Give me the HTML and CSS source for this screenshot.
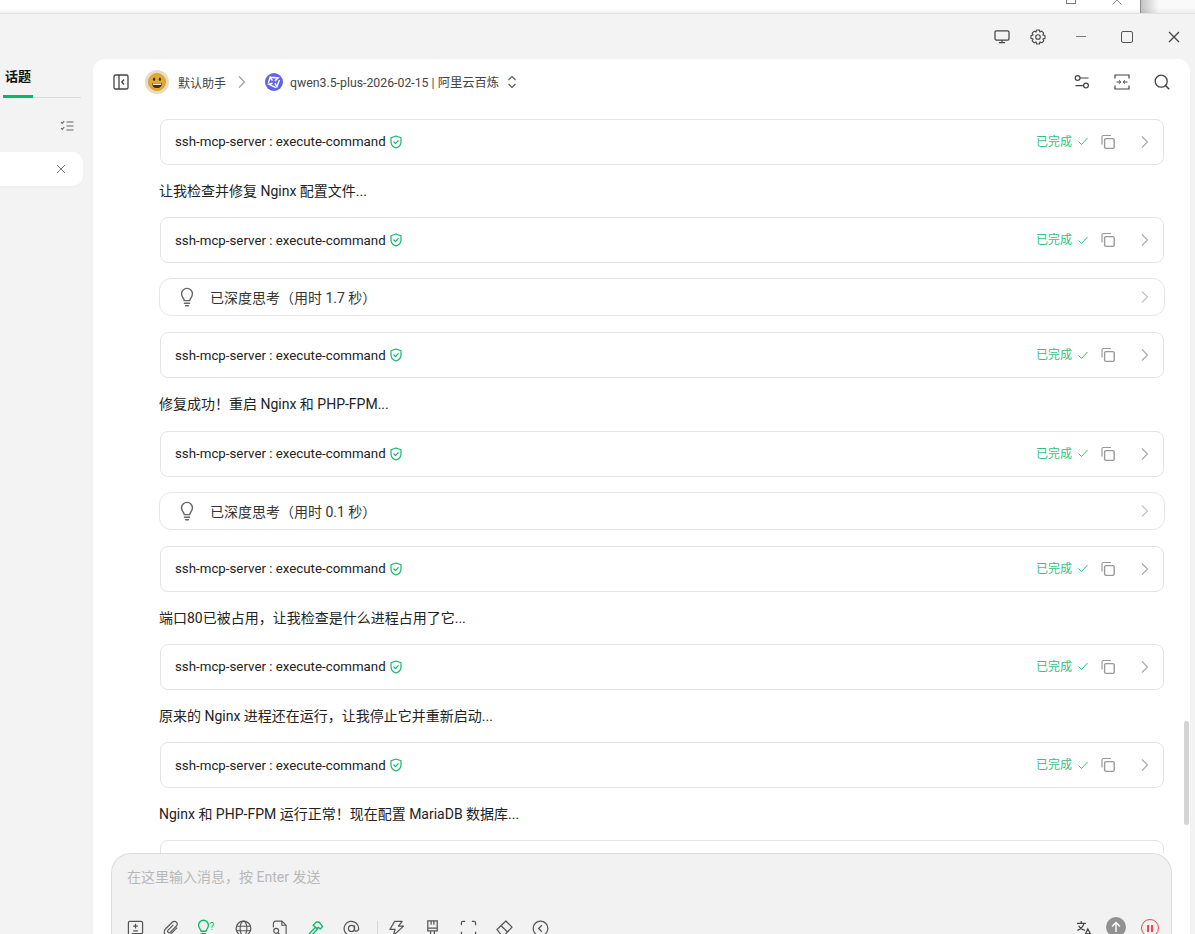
FILE: index.html
```html
<!DOCTYPE html>
<html lang="zh-CN">
<head>
<meta charset="utf-8">
<title>默认助手</title>
<link rel="stylesheet" href="styles.css">
</head>
<body>
<svg class="defs" width="0" height="0" aria-hidden="true">
  <symbol id="shield" viewBox="0 0 14 14"><path d="M7 1 L12 2.8 V7 C12 10 9.8 12 7 13 C4.2 12 2 10 2 7 V2.8 Z M4.9 7 L6.5 8.6 L9.2 5.6" fill="none" stroke="currentColor" stroke-width="1.2" stroke-linejoin="round" stroke-linecap="round"/></symbol>
  <symbol id="check" viewBox="0 0 12 12"><path d="M1.5 6.5 L4.5 9.5 L10.5 3" fill="none" stroke="currentColor" stroke-width="1"/></symbol>
  <symbol id="copy" viewBox="0 0 16 16"><path d="M2 10.5 V3 Q2 1.5 3.5 1.5 H11" fill="none" stroke="currentColor" stroke-width="1.2"/><rect x="4.6" y="4.6" width="9.6" height="9.8" rx="1.4" fill="none" stroke="currentColor" stroke-width="1.4"/></symbol>
  <symbol id="chev" viewBox="0 0 10 14"><path d="M2 1.5 L7.5 7 L2 12.5" fill="none" stroke="currentColor" stroke-width="1.2"/></symbol>
  <symbol id="bulb" viewBox="0 0 18 22"><path d="M6 15 C6 12.6 3 11.5 3 7.5 A6 6 0 0 1 15 7.5 C15 11.5 12 12.6 12 15 Z M6.2 17.8 H11.8 M7.4 20.6 H10.6" fill="none" stroke="currentColor" stroke-width="1.6" stroke-linecap="round" stroke-linejoin="round"/></symbol>
</svg>

<div class="backdrop"><div class="behind">
  <span class="behind-max"></span>
  <svg class="behind-x" width="10" height="5" viewBox="0 0 10 5"><path d="M0.5 4.5 L5 0 L9.5 4.5" fill="none" stroke="currentColor" stroke-width="1"/></svg>
</div></div>

<div class="window">
  <div class="titlebar">
    <svg class="ico-mon" width="16" height="14" viewBox="0 0 18 16"><rect x="1" y="1" width="16" height="10.5" rx="1.5" fill="none" stroke="currentColor" stroke-width="1.4"/><path d="M9 11.5 V14.5 M5.5 14.5 H12.5" stroke="currentColor" stroke-width="1.4"/></svg>
    <svg class="ico-gear" width="16" height="16" viewBox="0 0 16 16"><path d="M6.6 1 H9.4 L9.9 3 L11.7 2.1 L13.7 4.1 L12.8 5.9 L15 6.6 V9.4 L12.9 10 L13.8 11.8 L11.8 13.8 L10 12.9 L9.4 15 H6.6 L6 12.9 L4.2 13.8 L2.2 11.8 L3.1 10 L1 9.4 V6.6 L3.1 6 L2.2 4.2 L4.2 2.2 L6 3.1 Z" fill="none" stroke="currentColor" stroke-width="1.1" stroke-linejoin="round"/><circle cx="8" cy="8" r="2.3" fill="none" stroke="currentColor" stroke-width="1.1"/></svg>
    <span class="win-min"></span>
    <span class="win-max"></span>
    <svg class="win-close" width="12" height="12" viewBox="0 0 12 12"><path d="M1 1 L11 11 M11 1 L1 11" stroke="currentColor" stroke-width="1.3"/></svg>
  </div>

  <div class="columns">
    <aside class="sidebar">
      <div class="tabs"><div class="tab">话题</div></div>
      <div class="side-tools">
        <svg width="14" height="12" viewBox="0 0 14 12"><path d="M1 2.2 L2.3 3.5 L4.2 1 M1 8.2 L2.3 9.5 L4.2 7 M6.5 2 H13.5 M6.5 6 H13.5 M6.5 10 H13.5" fill="none" stroke="currentColor" stroke-width="1.1"/></svg>
      </div>
      <div class="topic">
        <svg width="10" height="10" viewBox="0 0 10 10"><path d="M1 1 L9 9 M9 1 L1 9" stroke="currentColor" stroke-width="1"/></svg>
      </div>
    </aside>

    <main class="panel">
      <header class="head">
        <svg class="h-side" width="16" height="16" viewBox="0 0 16 16"><rect x="1" y="1" width="14" height="14" rx="1.6" fill="none" stroke="currentColor" stroke-width="1.3"/><path d="M6 1 V15 M11 5.5 L8.8 8 L11 10.5" fill="none" stroke="currentColor" stroke-width="1.3"/></svg>
        <span class="avatar">
          <svg width="18" height="18" viewBox="0 0 16 16"><circle cx="8" cy="8" r="7.6" fill="#e4a92c" stroke="#b98a2a" stroke-width=".5"/><ellipse cx="5.4" cy="5.6" rx="1" ry="1.5" fill="#3a2a10"/><ellipse cx="10.6" cy="5.6" rx="1" ry="1.5" fill="#3a2a10"/><path d="M3.4 9 H12.6 C12.4 12 10.4 13.4 8 13.4 C5.6 13.4 3.6 12 3.4 9 Z" fill="#4a2f10"/><path d="M4.2 9.4 H11.8 V10.6 H4.2 Z" fill="#fff"/></svg>
        </span>
        <span class="h-name">默认助手</span>
        <svg class="h-chev" width="10" height="14" viewBox="0 0 10 14"><use href="#chev"/></svg>
        <span class="model-ico">
          <svg width="18" height="18" viewBox="0 0 16 16"><circle cx="8" cy="8" r="8" fill="#5f63e6"/><path d="M4.6 3.8 L11.6 4.4 L8.8 7 M12.8 6.2 L10.6 12.2 L8.8 9 M9.6 13 L3.4 10 L6.8 9 M3 8.8 L4.6 3.8 L6.6 6.8" fill="none" stroke="#fff" stroke-width="1.3"/></svg>
        </span>
        <span class="h-model">qwen3.5-plus-2026-02-15 | 阿里云百炼</span>
        <svg class="h-updown" width="10" height="14" viewBox="0 0 10 14"><path d="M1.5 5 L5 1.5 L8.5 5 M1.5 9 L5 12.5 L8.5 9" fill="none" stroke="currentColor" stroke-width="1.1"/></svg>
        <span class="head-gap"></span>
        <svg class="h-act" width="16" height="16" viewBox="0 0 16 16"><circle cx="3.6" cy="4" r="2.4" fill="none" stroke="currentColor" stroke-width="1.2"/><circle cx="12" cy="11.6" r="2.4" fill="none" stroke="currentColor" stroke-width="1.2"/><path d="M6 4 H14.5 M1.5 11.6 H9.6" stroke="currentColor" stroke-width="1.2"/></svg>
        <svg class="h-act" width="16" height="16" viewBox="0 0 16 16"><path d="M1 4.5 V1 H15 V4.5 M1 11.5 V15 H15 V11.5 M2.5 8 H6.5 M9.5 8 H13.5" fill="none" stroke="currentColor" stroke-width="1.2"/><path d="M5 6.4 L6.8 8 L5 9.6 M11 6.4 L9.2 8 L11 9.6" fill="none" stroke="currentColor" stroke-width="1"/></svg>
        <svg class="h-act" width="16" height="16" viewBox="0 0 16 16"><circle cx="7.2" cy="7.2" r="6" fill="none" stroke="currentColor" stroke-width="1.3"/><path d="M11.6 11.6 L15.2 15.2" stroke="currentColor" stroke-width="1.5"/></svg>
      </header>

      <section class="messages">
        <div class="tool"><span class="t-name">ssh-mcp-server : execute-command</span><svg class="t-shield" width="14" height="14"><use href="#shield"/></svg><span class="t-gap"></span><span class="t-done">已完成</span><svg class="t-check" width="12" height="12"><use href="#check"/></svg><svg class="t-copy" width="16" height="16"><use href="#copy"/></svg><svg class="t-chev" width="10" height="14"><use href="#chev"/></svg></div>
        <p class="say">让我检查并修复 Nginx 配置文件...</p>
        <div class="tool"><span class="t-name">ssh-mcp-server : execute-command</span><svg class="t-shield" width="14" height="14"><use href="#shield"/></svg><span class="t-gap"></span><span class="t-done">已完成</span><svg class="t-check" width="12" height="12"><use href="#check"/></svg><svg class="t-copy" width="16" height="16"><use href="#copy"/></svg><svg class="t-chev" width="10" height="14"><use href="#chev"/></svg></div>
        <div class="think"><svg class="b-ico" width="18" height="20"><use href="#bulb"/></svg><span class="b-text">已深度思考（用时 1.7 秒）</span><span class="t-gap"></span><svg class="t-chev light" width="10" height="14"><use href="#chev"/></svg></div>
        <div class="tool"><span class="t-name">ssh-mcp-server : execute-command</span><svg class="t-shield" width="14" height="14"><use href="#shield"/></svg><span class="t-gap"></span><span class="t-done">已完成</span><svg class="t-check" width="12" height="12"><use href="#check"/></svg><svg class="t-copy" width="16" height="16"><use href="#copy"/></svg><svg class="t-chev" width="10" height="14"><use href="#chev"/></svg></div>
        <p class="say">修复成功！重启 Nginx 和 PHP-FPM...</p>
        <div class="tool"><span class="t-name">ssh-mcp-server : execute-command</span><svg class="t-shield" width="14" height="14"><use href="#shield"/></svg><span class="t-gap"></span><span class="t-done">已完成</span><svg class="t-check" width="12" height="12"><use href="#check"/></svg><svg class="t-copy" width="16" height="16"><use href="#copy"/></svg><svg class="t-chev" width="10" height="14"><use href="#chev"/></svg></div>
        <div class="think"><svg class="b-ico" width="18" height="20"><use href="#bulb"/></svg><span class="b-text">已深度思考（用时 0.1 秒）</span><span class="t-gap"></span><svg class="t-chev light" width="10" height="14"><use href="#chev"/></svg></div>
        <div class="tool"><span class="t-name">ssh-mcp-server : execute-command</span><svg class="t-shield" width="14" height="14"><use href="#shield"/></svg><span class="t-gap"></span><span class="t-done">已完成</span><svg class="t-check" width="12" height="12"><use href="#check"/></svg><svg class="t-copy" width="16" height="16"><use href="#copy"/></svg><svg class="t-chev" width="10" height="14"><use href="#chev"/></svg></div>
        <p class="say">端口80已被占用，让我检查是什么进程占用了它...</p>
        <div class="tool"><span class="t-name">ssh-mcp-server : execute-command</span><svg class="t-shield" width="14" height="14"><use href="#shield"/></svg><span class="t-gap"></span><span class="t-done">已完成</span><svg class="t-check" width="12" height="12"><use href="#check"/></svg><svg class="t-copy" width="16" height="16"><use href="#copy"/></svg><svg class="t-chev" width="10" height="14"><use href="#chev"/></svg></div>
        <p class="say">原来的 Nginx 进程还在运行，让我停止它并重新启动...</p>
        <div class="tool"><span class="t-name">ssh-mcp-server : execute-command</span><svg class="t-shield" width="14" height="14"><use href="#shield"/></svg><span class="t-gap"></span><span class="t-done">已完成</span><svg class="t-check" width="12" height="12"><use href="#check"/></svg><svg class="t-copy" width="16" height="16"><use href="#copy"/></svg><svg class="t-chev" width="10" height="14"><use href="#chev"/></svg></div>
        <p class="say">Nginx 和 PHP-FPM 运行正常！现在配置 MariaDB 数据库...</p>
        <div class="tool"></div>
        <span class="scrollbar"></span>
      </section>

      <div class="composer">
        <div class="placeholder">在这里输入消息，按 Enter 发送</div>
        <div class="toolbar">
          <svg width="18" height="18" viewBox="0 0 18 18"><path d="M3 1.5 H15 Q16.5 1.5 16.5 3 V13 Q16.5 14.5 15 14.5 H6 L2.5 17 H1.5 V3 Q1.5 1.5 3 1.5 Z M9 4 V9 M6.5 6.5 H11.5 M6.5 11.5 H11.5" fill="none" stroke="currentColor" stroke-width="1.3"/></svg>
          <svg width="18" height="18" viewBox="0 0 18 18"><path d="M15 8 L8.5 14.5 C6.5 16.5 3.5 16.5 2.2 15 C0.8 13.6 1 11 3 9 L9.8 2.4 C11 1.2 13 1 14.2 2.2 C15.5 3.5 15.2 5.4 14 6.6 L7.6 13 C7 13.6 6 13.6 5.4 13 C4.8 12.4 4.8 11.4 5.4 10.8 L11 5.2" fill="none" stroke="currentColor" stroke-width="1.2"/></svg>
          <span class="t-bulb"><svg width="15" height="18" viewBox="0 0 18 22"><use href="#bulb"/></svg><i>?</i></span>
          <svg width="18" height="18" viewBox="0 0 18 18"><circle cx="9" cy="9" r="7.8" fill="none" stroke="currentColor" stroke-width="1.3"/><ellipse cx="9" cy="9" rx="3.6" ry="7.8" fill="none" stroke="currentColor" stroke-width="1.2"/><path d="M1.5 6.6 H16.5 M1.5 11.4 H16.5" stroke="currentColor" stroke-width="1.2"/></svg>
          <svg width="16" height="18" viewBox="0 0 16 18"><path d="M7 1.2 H10.5 L15 5.5 V15.5 Q15 16.8 13.8 16.8 H11 M10.5 1.2 V5.5 H15 M1.5 8 V4 Q1.5 1.2 4 1.2 H7" fill="none" stroke="currentColor" stroke-width="1.2"/><circle cx="4.5" cy="11.5" r="2.6" fill="none" stroke="currentColor" stroke-width="1.2"/><path d="M6.4 13.4 L8.4 15.6" stroke="currentColor" stroke-width="1.2"/></svg>
          <svg class="green" width="18" height="18" viewBox="0 0 18 18"><path d="M2 15 L9 7.6 L11 9.8 L4 17 Z M6.5 5.5 L10 2 L13 2.4 L16.5 7 L14 9.6 L12 7.6 L10.6 9 L7.8 6.6 Z" fill="none" stroke="currentColor" stroke-width="1.4" stroke-linejoin="round"/></svg>
          <svg width="18" height="18" viewBox="0 0 18 18"><circle cx="9" cy="9" r="3.2" fill="none" stroke="currentColor" stroke-width="1.3"/><path d="M12.2 5.8 V10.2 C12.2 12.6 16.6 12.4 16.6 9 A7.7 7.7 0 1 0 12.8 15.7" fill="none" stroke="currentColor" stroke-width="1.3"/></svg>
          <span class="sep"></span>
          <svg width="18" height="18" viewBox="0 0 18 18"><path d="M7 1.5 H15 L11 6.5 H16.5 L5.5 16.5 L7.5 10 H2 Z" fill="none" stroke="currentColor" stroke-width="1.3" stroke-linejoin="round"/></svg>
          <svg width="18" height="18" viewBox="0 0 18 18"><path d="M4 1 H14 V11.5 H4 Z M7.5 1 V5 M10.5 1 V5 M4 8.5 H14 M7 11.5 V15 Q7 17 9 17 Q11 17 11 15 V11.5" fill="none" stroke="currentColor" stroke-width="1.3"/></svg>
          <svg width="18" height="18" viewBox="0 0 18 18"><path d="M1.5 5.5 V3 Q1.5 1.5 3 1.5 H5.5 M12.5 1.5 H15 Q16.5 1.5 16.5 3 V5.5 M16.5 12.5 V15 Q16.5 16.5 15 16.5 H12.5 M5.5 16.5 H3 Q1.5 16.5 1.5 15 V12.5" fill="none" stroke="currentColor" stroke-width="1.3"/></svg>
          <svg width="18" height="18" viewBox="0 0 18 18"><path d="M1 10 L10.5 1 L17 7.5 L8.5 16.5 H6 Z M5.2 5.8 L12.4 13" fill="none" stroke="currentColor" stroke-width="1.3" stroke-linejoin="round"/></svg>
          <svg width="18" height="18" viewBox="0 0 18 18"><circle cx="9" cy="9" r="7.8" fill="none" stroke="currentColor" stroke-width="1.3"/><path d="M10.4 5.6 L7 9 L10.4 12.4" fill="none" stroke="currentColor" stroke-width="1.3"/></svg>
          <span class="t-gap"></span>
          <svg class="tr" width="18" height="18" viewBox="0 0 18 18"><path d="M5.5 1 V3 M1 3.5 H10.5 M8.5 3.5 C7.5 7 5 9.5 1.5 11 M2.8 6 C4 8.5 6.5 10 9.5 11 M9 17 L12.5 9.5 L16.5 17 M10.2 14.8 H15" fill="none" stroke="currentColor" stroke-width="1.3"/></svg>
          <span class="send"><svg width="12" height="12" viewBox="0 0 12 12"><path d="M6 11 V1.5 M2 5.5 L6 1.5 L10 5.5" fill="none" stroke="currentColor" stroke-width="1.4"/></svg></span>
          <span class="pause"><i></i><i></i></span>
        </div>
      </div>
    </main>
  </div>
</div>
</body>
</html>
```

FILE: styles.css
```css
* { box-sizing: border-box; }
html, body { margin: 0; height: 934px; overflow: hidden; }
body {
  background: #f3f3f3;
  color: #222;
  font-family: Roboto, "Noto Sans CJK SC", sans-serif;
  font-size: 14px;
}
.defs { position: absolute; }

.backdrop {
  height: 14px;
  background:
    linear-gradient(90deg, rgba(0,0,0,.22), rgba(0,0,0,0) 18px) 1141px 0 no-repeat,
    linear-gradient(#fafafa 0, #fafafa 8px, #ebebeb 14px);
  overflow: hidden;
}
.behind {
  width: 1141px;
  height: 14px;
  background: linear-gradient(#fff 0, #fff 9px, #ececec 14px);
  border-right: 1px solid #8c8c8c;
  position: relative;
}
.behind-max { position: absolute; left: 1066px; top: -7px; width: 10px; height: 11px; border: 1px solid #777; }
.behind-x { position: absolute; left: 1112px; top: 0; color: #888; }

.window {
  height: 920px;
  display: flex;
  flex-direction: column;
  background: #f3f3f3;
  box-shadow: 0 -1px 0 #e2e2e2;
  position: relative;
}
.titlebar {
  height: 45px;
  flex: none;
  display: flex;
  align-items: center;
  color: #444;
  padding: 0 15px 0 994px;
}
.ico-mon { margin-right: 20px; }
.ico-gear { margin-right: 30px; }
.win-min { width: 10px; height: 1px; background: #777; margin-right: 35px; }
.win-max { width: 12px; height: 12px; border: 1.3px solid #555; border-radius: 2px; margin-right: 35px; }
.win-close { color: #444; }

.columns { flex: 1; display: flex; min-height: 0; }
.sidebar { width: 93px; flex: none; }
.tabs {
  margin: 0 12px 0 3px;
  height: 39px;
  border-bottom: 1px solid #dcdcdc;
}
.tab {
  width: 30px;
  height: 39px;
  padding: 7px 0 0 2px;
  font-size: 13px;
  font-weight: 700;
  color: #111;
  line-height: 22px;
  white-space: nowrap;
  border-bottom: 3px solid #00b96b;
  margin-bottom: -1px;
}
.side-tools {
  height: 54px;
  display: flex;
  justify-content: flex-end;
  align-items: center;
  padding: 2px 19px 0 0;
  color: #666;
}
.topic {
  width: 83px;
  height: 34px;
  background: #fff;
  border-radius: 0 10px 10px 0;
  display: flex;
  align-items: center;
  justify-content: flex-end;
  padding-right: 17px;
  color: #777;
  box-shadow: 0 1px 3px rgba(0,0,0,.04);
}

.panel {
  width: 1097px;
  flex: none;
  background: #fff;
  border-radius: 12px 12px 0 0;
  display: flex;
  flex-direction: column;
  min-height: 0;
}
.head {
  height: 46px;
  flex: none;
  display: flex;
  align-items: center;
  padding: 0 20px;
  color: #444;
  font-size: 12px;
}
.h-side { margin-right: 16px; }
.avatar {
  width: 24px; height: 24px; border-radius: 50%;
  background: #e9dcbd;
  display: flex; align-items: center; justify-content: center;
  margin-right: 9px;
}
.h-name { margin-right: 11px; }
.h-chev { color: #9aa0ac; margin-right: 18px; }
.model-ico { width: 18px; height: 18px; margin-right: 7px; display: flex; }
.h-model { margin-right: 8px; white-space: nowrap; font-size: 12.3px; }
.h-updown { color: #555; }
.head-gap, .t-gap { flex: 1; }
.h-act { margin-left: 24px; }

.messages {
  flex: 1;
  min-height: 0;
  overflow: hidden;
  padding: 13.9px 26px 0 67px;
  position: relative;
}
.tool {
  height: 46px;
  border: 1px solid #e4e4e4;
  border-radius: 8px;
  display: flex;
  align-items: center;
  padding: 0 13px 0 14px;
  background: #fff;
}
.tool + .think { margin-top: 15px; }
.think + .tool { margin-top: 16px; }
.t-name { font-size: 13.3px; color: #222; white-space: nowrap; }
.t-shield { color: #12b76a; margin-left: 3px; }
.t-done { color: #34c185; font-size: 12px; margin-bottom: 3px; }
.t-check { color: #34c185; margin: 0 0 1px 5px; }
.t-copy { color: #999; margin-left: 11px; }
.t-chev { color: #aaa; margin-left: 24px; }
.t-chev.light { color: #c4c4c4; }
.think {
  height: 38px;
  margin: 0 -1px;
  border: 1px solid #e6e6e6;
  border-radius: 12px;
  display: flex;
  align-items: center;
  padding: 0 14px 0 18px;
}
.b-ico { color: #666; margin-right: 14px; }
.b-text { color: #333; font-size: 14px; }
.say {
  margin: 0 0 0 -1px;
  height: 52.32px;
  line-height: 52.32px;
  font-size: 14px;
  color: #222;
  white-space: nowrap;
}
.scrollbar {
  position: absolute;
  right: 1px;
  top: 616px;
  width: 5px;
  height: 104px;
  border-radius: 3px;
  background: #d4d4d4;
}

.composer {
  flex: none;
  height: 81px;
  margin: 0 18px;
  background: #f2f2f2;
  border: 1px solid #dcdcdc;
  border-bottom: 0;
  border-radius: 20px 20px 0 0;
  padding: 13px 15px 0 15px;
}
.placeholder { color: #b8b8b8; font-size: 14px; line-height: 20px; height: 49px; }
.toolbar {
  display: flex;
  align-items: center;
  gap: 19px;
  height: 24px;
  color: #555;
}
.toolbar > svg { width: 17px; height: 17px; flex: none; }
.t-bulb { width: 17px; display: flex; color: #00b96b; white-space: nowrap; margin-left: -0.5px; }
.t-bulb svg { margin-left: -3px; flex: none; }
.t-bulb i { font-size: 10px; font-style: normal; line-height: 16px; margin-left: -1px; }
.green { color: #00b96b; }
.sep { width: 1px; height: 14px; background: #d8d8d8; margin: 0 -9px 0 -2px; }
.tr { color: #444; }
.send {
  width: 20px; height: 20px; border-radius: 50%;
  background: #919191; color: #fff;
  display: flex; align-items: center; justify-content: center;
  margin: 0 0 2px -5.5px;
  flex: none;
}
.pause {
  width: 18px; height: 18px; border-radius: 50%;
  border: 1.4px solid #f5454f;
  display: flex; align-items: center; justify-content: center; gap: 2px;
  margin: 0 -3px 0 -4px;
  flex: none;
}
.pause i { width: 1.6px; height: 7px; background: #f5454f; }
```
